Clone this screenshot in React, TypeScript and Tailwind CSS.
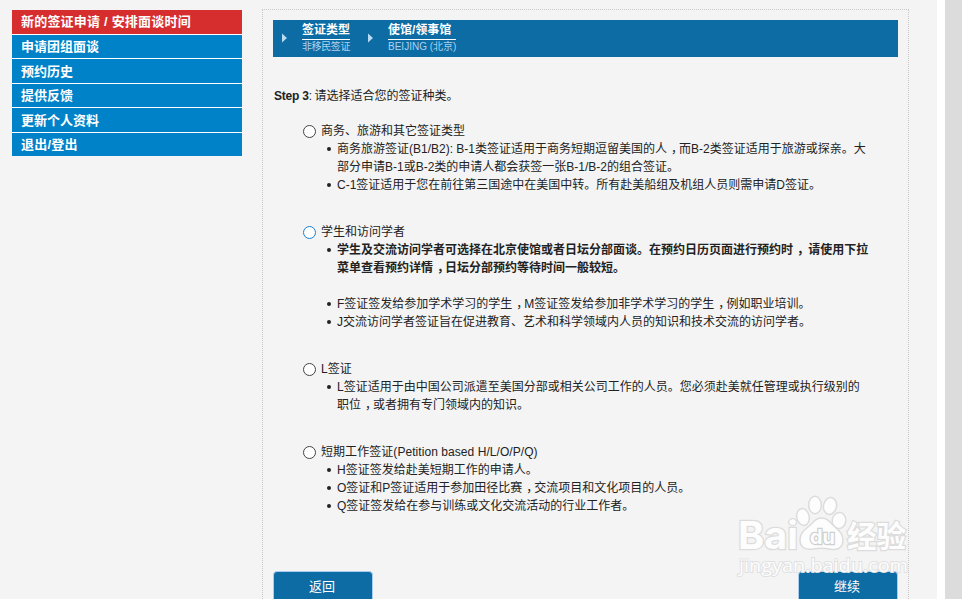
import React from "react";

const menu = [
  { label: "新的签证申请 / 安排面谈时间", cls: "h-[24px] bg-[#d62e2f] tracking-[0.2px]" },
  { label: "申请团组面谈", cls: "h-[23px] bg-[#0082c8]" },
  { label: "预约历史", cls: "h-[24px] pt-[2px] bg-[#0082c8]" },
  { label: "提供反馈", cls: "h-[23px] bg-[#0082c8]" },
  { label: "更新个人资料", cls: "h-[24px] pt-[2px] bg-[#0082c8]" },
  { label: "退出/登出", cls: "h-[23px] bg-[#0082c8] tracking-[0.2px]" },
];

type Item = { lines: string[]; bold?: boolean };
type Group = { title: string; focused?: boolean; gap: string; items: Item[] };

const groups: Group[] = [
  {
    title: "商务、旅游和其它签证类型",
    gap: "mt-[16px]",
    items: [
      {
        lines: [
          "商务旅游签证(B1/B2): B-1类签证适用于商务短期逗留美国的人，而B-2类签证适用于旅游或探亲。大",
          "部分申请B-1或B-2类的申请人都会获签一张B-1/B-2的组合签证。",
        ],
      },
      { lines: ["C-1签证适用于您在前往第三国途中在美国中转。所有赴美船组及机组人员则需申请D签证。"] },
    ],
  },
  {
    title: "学生和访问学者",
    focused: true,
    gap: "mt-[29px]",
    items: [
      {
        bold: true,
        lines: [
          "学生及交流访问学者可选择在北京使馆或者日坛分部面谈。在预约日历页面进行预约时， 请使用下拉",
          "菜单查看预约详情，日坛分部预约等待时间一般较短。",
        ],
      },
      { lines: ["F签证签发给参加学术学习的学生，M签证签发给参加非学术学习的学生，例如职业培训。"] },
      { lines: ["J交流访问学者签证旨在促进教育、艺术和科学领域内人员的知识和技术交流的访问学者。"] },
    ],
  },
  {
    title: "L签证",
    gap: "mt-[29px]",
    items: [
      {
        lines: [
          "L签证适用于由中国公司派遣至美国分部或相关公司工作的人员。您必须赴美就任管理或执行级别的",
          "职位，或者拥有专门领域内的知识。",
        ],
      },
    ],
  },
  {
    title: "短期工作签证(Petition based H/L/O/P/Q)",
    gap: "mt-[29px]",
    items: [
      { lines: ["H签证签发给赴美短期工作的申请人。"] },
      { lines: ["O签证和P签证适用于参加田径比赛，交流项目和文化项目的人员。"] },
      { lines: ["Q签证签发给在参与训练或文化交流活动的行业工作者。"] },
    ],
  },
];

function Line({ text }: { text: string }) {
  return (
    <div>
      {text.split("，").map((part, i) => (
        <React.Fragment key={i}>
          {i > 0 && <span className="pr-[2px] pl-[4px] [font-feature-settings:'halt']">，</span>}
          {part}
        </React.Fragment>
      ))}
    </div>
  );
}

function Crumb({ title, value, tight }: { title: string; value: string; tight?: boolean }) {
  return (
    <div className="flex items-start">
      <svg className="mt-[13px] h-[10px] w-[6px]" viewBox="0 0 6 10">
        <path d="M0 0.5L5 5L0 9.5Z" fill="#b8dcf6" />
      </svg>
      <div className="ml-[14px]">
        <div className="h-[20px] border-b border-white text-[12px] leading-[20px] font-bold text-white">{title}</div>
        <div className={"text-[10px] leading-[14px] text-[#a9d3f2] " + (tight ? "tracking-[-0.4px]" : "")}>{value}</div>
      </div>
    </div>
  );
}

function Watermark() {
  return (
    <svg className="absolute top-[485px] left-[730px] h-[100px] w-[190px]" viewBox="0 0 190 100">
      <g fill="#fdfdfd" stroke="#dcdcdc" strokeWidth="1.5">
        <ellipse cx="85" cy="20" rx="6.3" ry="8.7" />
        <ellipse cx="100" cy="21" rx="6.5" ry="8.5" transform="rotate(12 100 21)" />
        <ellipse cx="73" cy="32" rx="6.2" ry="8.5" transform="rotate(-12 73 32)" />
        <ellipse cx="109" cy="35.5" rx="6.8" ry="8" transform="rotate(8 109 35.5)" />
        <path d="M91 33C85 33 83 38 78 42C73 46 70 49 70 55C70 63 76 65 83 64C89 63 93 63 99 64C107 66 113 63 113 55C113 48 108 45 104 41C99 36 97 33 91 33Z" />
        <g fontFamily="Inter, 'Liberation Sans', sans-serif" fontWeight="700" paintOrder="stroke" strokeWidth="2.5">
          <text x="8" y="64" fontSize="38" textLength="60" lengthAdjust="spacingAndGlyphs">Bai</text>
          <text x="117" y="62" fontSize="30" textLength="59" lengthAdjust="spacingAndGlyphs" fontFamily="'Noto Sans CJK SC', sans-serif">经验</text>
          <text x="9" y="87" fontSize="19" fontWeight="400" stroke="#e0e0e0" textLength="169" lengthAdjust="spacingAndGlyphs" strokeWidth="1.8" fontFamily="'Open Sans', sans-serif">jingyan.baidu.com</text>
          <text x="80" y="59" fontSize="20" stroke="#cfcfcf" strokeWidth="2.4" textLength="25" lengthAdjust="spacingAndGlyphs">du</text>
        </g>
      </g>
    </svg>
  );
}

function Button({ children }: { children: React.ReactNode }) {
  return (
    <button className="h-[34px] w-[100px] rounded-[4px] border border-[#a8cdf0] bg-[#0c6ca3] pr-[2px] pb-[3px] text-[13px] text-white">
      {children}
    </button>
  );
}

export default function App() {
  return (
    <div className="relative flex h-[599px] w-[962px] overflow-hidden bg-[#dcdcdc] font-['Liberation_Sans','Noto_Sans_CJK_SC',sans-serif] text-[12px] leading-[18px] whitespace-pre text-[#222]">
      <div className="flex w-[945px] items-start border-r-8 border-white bg-[#f4f4f4]">
        <nav className="mt-[10px] ml-[12px] flex w-[230px] flex-col gap-px bg-white text-[13px] font-bold text-white">
          {menu.map((m) => (
            <a key={m.label} className={"flex items-center pl-[9px] " + m.cls}>{m.label}</a>
          ))}
        </nav>
        <main className="mt-[9px] ml-[20px] h-[620px] w-[647px] border border-dotted border-[#c8c8c8] px-[10px] pt-[10px]">
          <div className="flex h-[37px] w-[625px] gap-[18px] bg-[#0c6ca3] pl-[9px]">
            <Crumb title="签证类型" value="非移民签证" tight />
            <Crumb title="使馆/领事馆" value="BEIJING (北京)" />
          </div>
          <p className="mt-[30px] pl-px"><b className="tracking-[-0.2px]">Step 3</b><span className="tracking-[-0.5px]">: </span>请选择适合您的签证种类。</p>
          <div className="pt-px">
            {groups.map((g) => (
              <section key={g.title} className={g.gap}>
                <label className="flex h-[18px] items-center pl-[30px]">
                  <span className={"mr-[5px] h-[13px] w-[13px] rounded-full border bg-white " + (g.focused ? "border-[#1a7fd4]" : "border-[#444]")} />
                  <span className={g.title.includes("Petition") ? "tracking-[0.06px]" : ""}>{g.title}</span>
                </label>
                <ul className="pl-[54px]">
                  {g.items.map((it) => (
                    <li key={it.lines[0]} className={"flex " + (it.bold ? "mb-[18px] font-bold" : "")}>
                      <span className="mt-[7px] mr-[6px] h-[4px] w-[4px] rounded-full bg-[#222]" />
                      <div>
                        {it.lines.map((l) => <Line key={l} text={l} />)}
                      </div>
                    </li>
                  ))}
                </ul>
              </section>
            ))}
          </div>
          <div className="mt-[56px] flex w-[625px] justify-between">
            <Button>返回</Button>
            <Button>继续</Button>
          </div>
        </main>
      </div>
      <Watermark />
    </div>
  );
}
